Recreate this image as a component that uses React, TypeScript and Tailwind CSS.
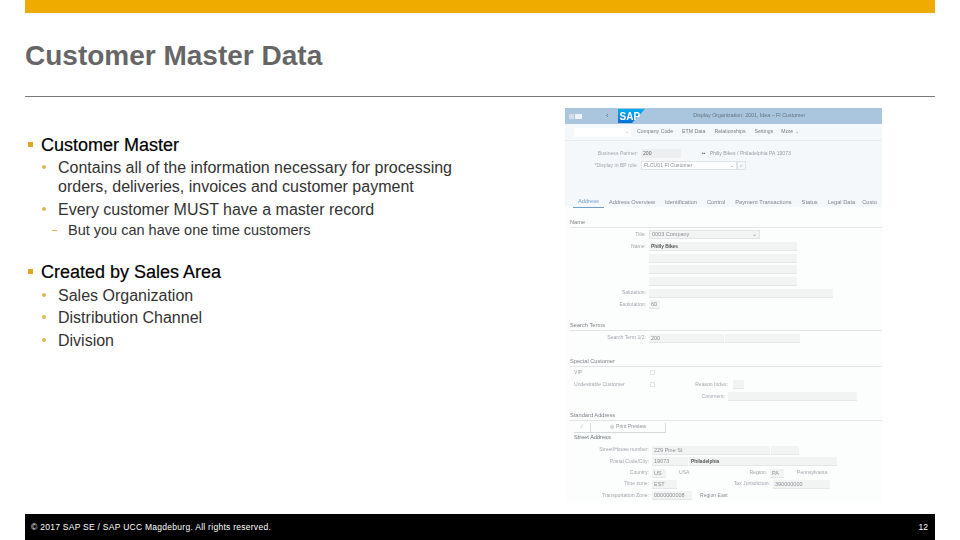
const fieldBg = "bg-[#f2f3f3] border-b border-[#e4e6e7]";

function Input({ w, text, strong }: { w: number; text?: string; strong?: boolean }) {
  return (
    <div className={`${fieldBg} h-[9px] shrink-0 pl-[2px] leading-[9px] ${strong ? "text-[4.8px] font-bold text-[#555]" : "text-[5.5px] text-[#8b9095]"}`} style={{ width: w }}>
      {text}
    </div>
  );
}

function Label({ w, text }: { w: number; text?: string }) {
  return (
    <div className="shrink-0 whitespace-nowrap pr-[3px] text-right text-[#a3a8ad]" style={{ width: w }}>
      {text}
    </div>
  );
}

function Row({ children, className = "h-[11.7px]" }: { children: React.ReactNode; className?: string }) {
  return <div className={`flex items-center ${className}`}>{children}</div>;
}

function Heading({ text }: { text: string }) {
  return (
    <div className="ml-[5px] h-[10px] border-b border-[#e3e5e7] text-[5.7px] leading-[9px] text-[#7d8388]">
      {text}
    </div>
  );
}

function SapLogo() {
  return (
    <svg width="27" height="14" viewBox="0 0 27 14" className="shrink-0">
      <defs>
        <linearGradient id="sapBlue" x1="0" y1="0" x2="0" y2="1">
          <stop offset="0" stopColor="#00aeef" />
          <stop offset="1" stopColor="#0a6ed1" />
        </linearGradient>
      </defs>
      <polygon points="0,0 27,0 14,14 0,14" fill="url(#sapBlue)" />
      <text x="1.5" y="10.5" fontSize="10" fontWeight="700" fill="#fff" fontFamily="Liberation Sans">SAP</text>
    </svg>
  );
}

function SapScreen() {
  return (
    <div className="flex h-[395px] w-[317px] shrink-0 flex-col overflow-hidden bg-[#fcfdfd] text-[5.1px] blur-[0.4px]">
      <div className="flex h-[16px] shrink-0 items-center bg-[#a9c6de] pl-[4px]">
        <div className="h-[5px] w-[5px] bg-[#d5dee6]" />
        <div className="ml-[1px] h-[5px] w-[7px] bg-[#eef3f7]" />
        <div className="ml-[24px] text-[7px] text-[#56636e]">‹</div>
        <div className="ml-[10px]"><SapLogo /></div>
        <div className="ml-[48px] text-[5.3px] text-[#66727c]">Display Organization: 2001, Idea – FI Customer</div>
      </div>

      <div className="flex h-[83px] shrink-0 flex-col bg-[#f5f8fb]">
        <div className="flex h-[17px] shrink-0 items-center border-b border-[#e8ecef] pl-[9px] text-[5.2px] text-[#7b8086]">
          <div className="flex h-[9px] w-[57px] items-center justify-end bg-white pr-[2px] text-[#a8b0b6]">⌄</div>
          <span className="ml-[6px]">Company Code</span>
          <span className="ml-[9px]">ETM Data</span>
          <span className="ml-[9px]">Relationships</span>
          <span className="ml-[9px]">Settings</span>
          <span className="ml-[8px]">More ⌄</span>
        </div>
        <Row className="mt-[8px] h-[9px]">
          <Label w={76} text="Business Partner:" />
          <div className="h-[9px] w-[40px] bg-[#eceef0] pl-[2px] leading-[9px] text-[#666]">200</div>
          <div className="ml-[21px] text-[#6b7075]">▪▪</div>
          <span className="ml-[4px] text-[#989da2]">Philly Bikes / Philadelphia PA 19073</span>
        </Row>
        <Row className="mt-[3px] h-[9px]">
          <Label w={76} text="*Display in BP role:" />
          <div className="flex h-[9px] w-[96px] justify-between border border-[#dfe3e6] bg-white px-[2px] leading-[7px] text-[#8b9095]">
            <span>FLCU01 FI Customer</span><span>⌄</span>
          </div>
          <div className="flex h-[9px] w-[9px] items-center justify-center border border-[#dfe3e6] text-[#7d94a8]">⌕</div>
        </Row>
        <div className="ml-[8px] mt-[27px] flex items-end text-[5.7px] leading-[8px] text-[#7f868c]">
          <span className="border-b border-[#6f9fc8] px-[5px] pb-[2px] text-[#6f9fc8]">Address</span>
          <span className="ml-[5px] pb-[2px]">Address Overview</span>
          <span className="ml-[10px] pb-[2px]">Identification</span>
          <span className="ml-[10px] pb-[2px]">Control</span>
          <span className="ml-[10px] pb-[2px]">Payment Transactions</span>
          <span className="ml-[10px] pb-[2px]">Status</span>
          <span className="ml-[10px] pb-[2px]">Legal Data</span>
          <span className="ml-[7px] pb-[2px]">Custo</span>
        </div>
      </div>

      <div className="mt-[11px]"><Heading text="Name" /></div>
      <div className="mt-[1px]">
        <Row>
          <Label w={84} text="Title:" />
          <div className="flex h-[9px] w-[111px] justify-between border border-[#e2e4e6] bg-[#f2f3f3] px-[2px] text-[5.5px] leading-[7px] text-[#8b9095]">
            <span>0003 Company</span><span>⌄</span>
          </div>
        </Row>
        <Row><Label w={84} text="Name:" /><Input w={148} text="Philly Bikes" strong /></Row>
        <Row><Label w={84} /><Input w={148} /></Row>
        <Row><Label w={84} /><Input w={148} /></Row>
        <Row><Label w={84} /><Input w={148} /></Row>
        <Row><Label w={84} text="Salutation:" /><Input w={184} /></Row>
        <Row><Label w={84} text="Esolutation:" /><Input w={11} text="60" /></Row>
      </div>

      <div className="mt-[10px]"><Heading text="Search Terms" /></div>
      <Row className="mt-[2px] h-[11px]">
        <Label w={84} text="Search Term 1/2:" />
        <Input w={75} text="200" />
        <div className="ml-[1px]"><Input w={75} /></div>
      </Row>

      <div className="mt-[13px]"><Heading text="Special Customer" /></div>
      <Row className="h-[12px]">
        <div className="w-[85px] pl-[9px] text-[#a3a8ad]">VIP</div>
        <div className="h-[5px] w-[5px] border border-[#e3e5e7]" />
      </Row>
      <Row className="h-[12px]">
        <div className="w-[85px] pl-[9px] text-[#a3a8ad]">Undesirable Customer</div>
        <div className="h-[5px] w-[5px] border border-[#e3e5e7]" />
        <div className="w-[73px] text-right text-[#a3a8ad]">Reason Index:</div>
        <div className="ml-[5px]"><Input w={11} /></div>
      </Row>
      <Row className="h-[12px]">
        <div className="w-[160px] text-right text-[#a3a8ad]">Comment:</div>
        <div className="ml-[3px]"><Input w={129} /></div>
      </Row>

      <div className="mt-[8px]"><Heading text="Standard Address" /></div>
      <div className="ml-[9px] mt-[2px] flex h-[10px] text-[#8b9095]">
        <div className="flex w-[17px] items-center justify-center border-r border-b border-[#d8dbde]">∕</div>
        <div className="flex w-[75px] items-center justify-center gap-[2px] border-r border-b border-[#d8dbde]">
          <span>◎</span><span>Print Preview</span>
        </div>
      </div>
      <div className="ml-[9px] text-[5.6px] leading-[9px] text-[#6f757a]">Street Address</div>
      <div className="mt-[3px]">
        <Row className="h-[11px]">
          <Label w={87} text="Street/House number:" />
          <Input w={118} text="229 Pine St" />
          <div className="ml-[1px]"><Input w={28} /></div>
        </Row>
        <Row className="h-[12px]">
          <Label w={87} text="Postal Code/City:" />
          <Input w={36} text="19073" />
          <div className="ml-[1px]"><Input w={148} text="Philadelphia" strong /></div>
        </Row>
        <Row className="h-[11px]">
          <Label w={87} text="Country:" />
          <Input w={14} text="US" />
          <span className="ml-[13px] w-[70px] text-[#a3a8ad]">USA</span>
          <div className="w-[21px] whitespace-nowrap pr-[3px] text-right text-[#a3a8ad]">Region:</div>
          <Input w={14} text="PA" />
          <span className="ml-[13px] text-[#a3a8ad]">Pennsylvania</span>
        </Row>
        <Row className="h-[11px]">
          <Label w={87} text="Time zone:" />
          <Input w={25} text="EST" />
          <div className="w-[96px] pr-[3px] text-right text-[#a3a8ad]">Tax Jurisdiction:</div>
          <Input w={57} text="390000000" />
        </Row>
        <Row className="h-[12px]">
          <Label w={87} text="Transportation Zone:" />
          <Input w={40} text="0000000008" />
          <span className="ml-[8px] text-[#8b9095]">Region East</span>
        </Row>
      </div>
    </div>
  );
}

function L1({ children, className = "" }: { children: React.ReactNode; className?: string }) {
  return (
    <div className={`flex text-[18px] leading-[20px] text-black [-webkit-text-stroke:0.2px_black] ${className}`}>
      <span className="mt-[7px] h-[5px] w-[5px] shrink-0 bg-[#e0a924]" />
      <span className="ml-[8px]">{children}</span>
    </div>
  );
}

function L2({ children, className = "" }: { children: React.ReactNode; className?: string }) {
  return (
    <div className={`ml-[14px] flex text-[16px] leading-[19px] text-[#333] ${className}`}>
      <span className="mt-[7px] h-[4px] w-[4px] shrink-0 rounded-full bg-[#e0b850]" />
      <span className="ml-[12px]">{children}</span>
    </div>
  );
}

export default function App() {
  return (
    <div className="flex h-[540px] w-[960px] flex-col bg-white px-[25px] font-['Liberation_Sans',Arial,sans-serif]">
      <div className="h-[13px] shrink-0 bg-[#f0ab00]" />
      <h1 className="mt-[27px] h-[32px] text-[28px] font-bold leading-[32px] text-[#666]">Customer Master Data</h1>
      <div className="mt-[24px] h-px shrink-0 bg-[#777]" />

      <div className="flex min-h-0 flex-1">
        <div className="w-[540px] shrink-0 pl-[3px] pt-[38px]">
          <L1>Customer Master</L1>
          <L2 className="mt-[3px]">Contains all of the information necessary for processing<br />orders, deliveries, invoices and customer payment</L2>
          <L2 className="mt-[4px]">Every customer MUST have a master record</L2>
          <div className="ml-[24px] mt-[2px] flex text-[14.5px] leading-[18px] text-[#333]">
            <span className="mt-[9px] h-px w-[5px] shrink-0 bg-[#e0b850]" />
            <span className="ml-[11px]">But you can have one time customers</span>
          </div>
          <L1 className="mt-[23px]">Created by Sales Area</L1>
          <L2 className="mt-[4px]">Sales Organization</L2>
          <L2 className="mt-[3px]">Distribution Channel</L2>
          <L2 className="mt-[4px]">Division</L2>
        </div>
        <div className="pt-[11px]">
          <SapScreen />
        </div>
      </div>

      <div className="flex h-[26px] shrink-0 items-center justify-between bg-black pl-[6px] pr-[7px] text-[8.5px] text-white">
        <span className="tracking-[0.27px]">© 2017 SAP SE / SAP UCC Magdeburg. All rights reserved.</span>
        <span>12</span>
      </div>
    </div>
  );
}
